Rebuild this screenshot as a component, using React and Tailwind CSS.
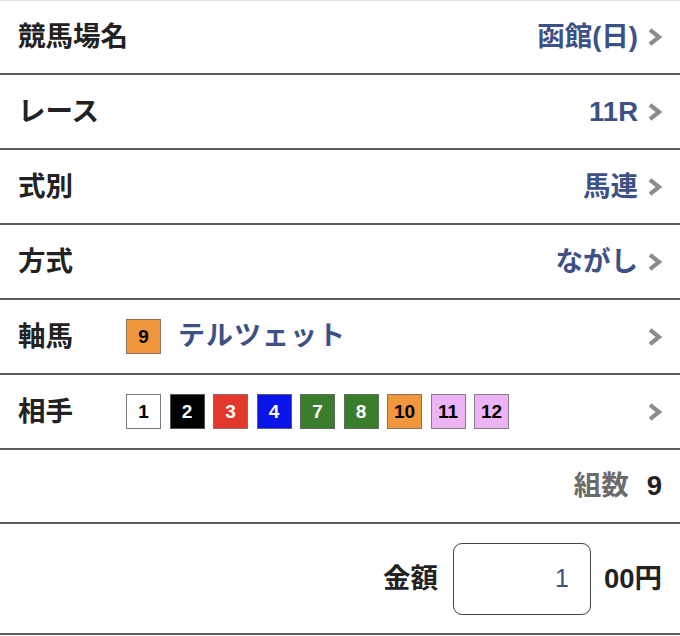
import React from "react";

const FONT = { fontFamily: '"Liberation Sans", "Noto Sans CJK JP", sans-serif' };

function Chevron() {
  return (
    <svg width="16" height="20" viewBox="0 0 16 20" className="shrink-0">
      <polyline points="3,2.8 12,10 3,17.2" fill="none" stroke="#8c8c8c" strokeWidth="4.2" strokeLinecap="butt" strokeLinejoin="miter" />
    </svg>
  );
}

function Row({ label, children, right, h = "h-[75px]" }) {
  return (
    <div className={`flex items-center ${h} border-b-2 border-[#5c5c5c] pl-[18px] pr-[17px]`}>
      <div className="w-[108px] shrink-0 whitespace-nowrap text-[27.5px] font-bold text-[#222] leading-none">{label}</div>
      <div className="flex-1 flex items-center">{children}</div>
      {right}
    </div>
  );
}

function Box({ n, bg, fg, border }) {
  return (
    <div
      className={`w-[35px] h-[35px] flex items-center justify-center border ${bg} ${fg} ${border} text-[19px] font-bold leading-none`}
    >
      {n}
    </div>
  );
}

export default function App() {
  const boxes = [
    { n: 1, bg: "bg-white", fg: "text-black", border: "border-[#7a7a7a]" },
    { n: 2, bg: "bg-black", fg: "text-white", border: "border-[#555]" },
    { n: 3, bg: "bg-[#e3392c]", fg: "text-white", border: "border-[#8a6a66]" },
    { n: 4, bg: "bg-[#0b14e8]", fg: "text-white", border: "border-[#555c80]" },
    { n: 7, bg: "bg-[#3a7d2c]", fg: "text-white", border: "border-[#5e705a]" },
    { n: 8, bg: "bg-[#3a7d2c]", fg: "text-white", border: "border-[#5e705a]" },
    { n: 10, bg: "bg-[#f0963c]", fg: "text-black", border: "border-[#8a7260]" },
    { n: 11, bg: "bg-[#ecb4f4]", fg: "text-black", border: "border-[#8a7a8c]" },
    { n: 12, bg: "bg-[#ecb4f4]", fg: "text-black", border: "border-[#8a7a8c]" },
  ];
  const blue = "text-[#3d5186]";
  return (
    <div className="w-[680px] h-[636px] bg-white overflow-hidden border-t border-[#e2e2e2]" style={FONT}>
      <Row
        label="競馬場名"
        h="h-[74px]"
        right={
          <div className="flex items-center gap-[9px]">
            <span className={`text-[27.5px] font-bold ${blue}`}>函館(日)</span>
            <Chevron />
          </div>
        }
      />
      <Row
        label="レース"
        right={
          <div className="flex items-center gap-[9px]">
            <span className={`text-[27.5px] font-bold ${blue}`}>11R</span>
            <Chevron />
          </div>
        }
      />
      <Row
        label="式別"
        right={
          <div className="flex items-center gap-[9px]">
            <span className={`text-[27.5px] font-bold ${blue}`}>馬連</span>
            <Chevron />
          </div>
        }
      />
      <Row
        label="方式"
        right={
          <div className="flex items-center gap-[9px]">
            <span className={`text-[27.5px] font-bold ${blue}`}>ながし</span>
            <Chevron />
          </div>
        }
      />
      <Row label="軸馬" right={<Chevron />}>
        <div className="flex items-center gap-[17px]">
          <Box n={9} bg="bg-[#f0963c]" fg="text-black" border="border-[#8a7260]" />
          <span className={`text-[27px] font-bold ${blue} tracking-[1px]`}>テルツェット</span>
        </div>
      </Row>
      <Row label="相手" right={<Chevron />}>
        <div className="flex items-center gap-[8.5px]">
          {boxes.map((b) => (
            <Box key={b.n} {...b} />
          ))}
        </div>
      </Row>
      <div className="flex items-center justify-end h-[74px] border-b-2 border-[#5c5c5c] pr-[18px]">
        <span className="text-[27.5px] font-bold text-[#6b6b6b]">組数</span>
        <span className="ml-[18px] text-[27.5px] font-bold text-[#222]">9</span>
      </div>
      <div className="flex items-center justify-end h-[111px] border-b-2 border-[#5c5c5c] pr-[18px]">
        <span className="text-[27.5px] font-bold text-[#222]">金額</span>
        <div className="ml-[15px] w-[138px] h-[72px] rounded-[9px] border-[1.5px] border-[#444] flex items-center justify-end pr-[21px]">
          <span className="text-[25px] text-[#3d5186]">1</span>
        </div>
        <span className="ml-[13px] text-[27.5px] font-bold text-[#222]">00円</span>
      </div>
    </div>
  );
}
